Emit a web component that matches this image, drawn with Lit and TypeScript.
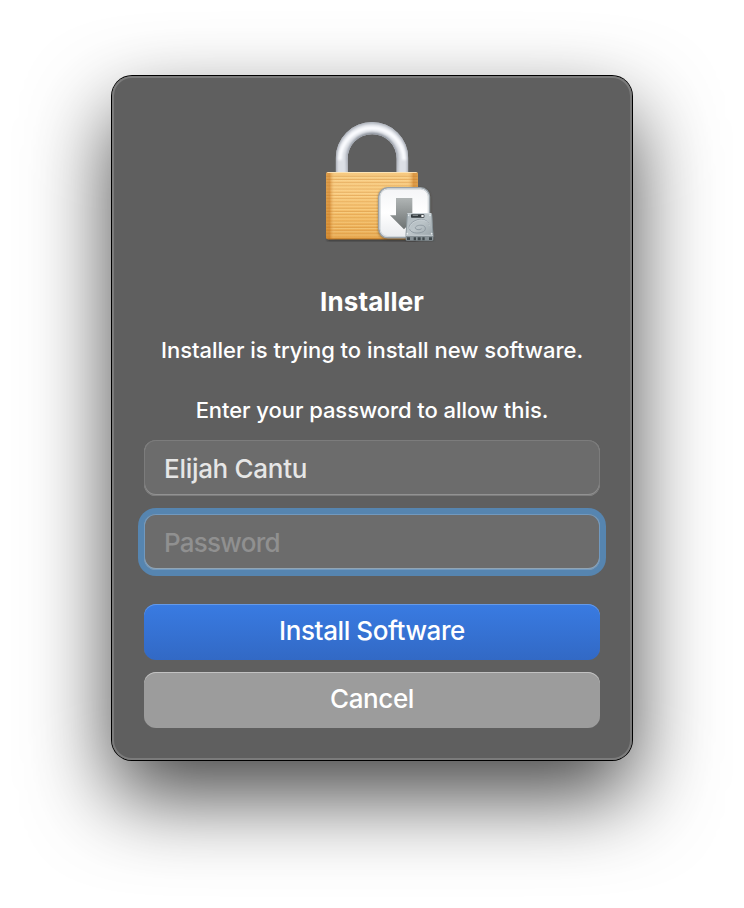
import { LitElement, html, css, svg } from "lit";
import { customElement } from "lit/decorators.js";

@customElement("installer-lock-icon")
class InstallerLockIcon extends LitElement {
  static styles = css`
    :host { display: block; width: 130px; height: 140px; }
    svg { display: block; width: 130px; height: 140px; }
  `;

  render() {
    const grooves = Array.from({ length: 19 }, (_, i) => 199 + i * 9.6);
    return html`
      <svg viewBox="0 0 390 420" aria-hidden="true">
        <defs>
          <linearGradient id="body" x1="0" y1="0" x2="0" y2="1">
            <stop offset="0" stop-color="#f5c67d" />
            <stop offset=".3" stop-color="#f8c87c" />
            <stop offset=".7" stop-color="#f1b55a" />
            <stop offset="1" stop-color="#e3a046" />
          </linearGradient>
          <linearGradient id="sides" x1="0" y1="0" x2="1" y2="0">
            <stop offset="0" stop-color="#c0741c" stop-opacity=".5" />
            <stop offset=".04" stop-color="#c8771f" stop-opacity=".6" />
            <stop offset=".1" stop-color="#ffe0a0" stop-opacity=".1" />
            <stop offset=".88" stop-color="#ffe0a0" stop-opacity=".1" />
            <stop offset=".95" stop-color="#c8771f" stop-opacity=".6" />
            <stop offset="1" stop-color="#c0741c" stop-opacity=".5" />
          </linearGradient>
          <linearGradient id="badge" x1="0" y1="0" x2="0" y2="1">
            <stop offset="0" stop-color="#f4f5f7" />
            <stop offset=".5" stop-color="#ffffff" />
            <stop offset="1" stop-color="#e9ebee" />
          </linearGradient>
          <linearGradient id="arrow" x1="0" y1="0" x2="0" y2="1">
            <stop offset="0" stop-color="#b0b5b5" />
            <stop offset="1" stop-color="#6d7272" />
          </linearGradient>
          <linearGradient id="disk" x1="0" y1="0" x2="1" y2="1">
            <stop offset="0" stop-color="#aeb8bd" />
            <stop offset=".5" stop-color="#bcc5c9" />
            <stop offset="1" stop-color="#97a2a7" />
          </linearGradient>
          <linearGradient id="archFade" x1="0" y1="60" x2="0" y2="187" gradientUnits="userSpaceOnUse">
            <stop offset="0" stop-color="#7f858f" />
            <stop offset=".6" stop-color="#a6abb5" />
            <stop offset="1" stop-color="#b9bdc6" />
          </linearGradient>
          <filter id="soft" x="-20%" y="-20%" width="140%" height="140%"><feGaussianBlur stdDeviation="3" /></filter>
          <filter id="slight" x="-20%" y="-20%" width="140%" height="140%"><feGaussianBlur stdDeviation="3" /></filter>
          <clipPath id="shackle"><path d="M62 187V145a109 109 0 0 1 218 0v42h-35v-41a73.500 73.500 0 0 0-147 0v41z" /></clipPath>
        </defs>
        <rect x="36" y="378" width="272" height="15" rx="6" fill="#222" opacity=".6" filter="url(#soft)" />
        <g clip-path="url(#shackle)">
          <rect x="55" y="30" width="235" height="160" fill="#dcdfe5" />
          <path d="M98 195v-49a73.500 73.500 0 0 1 147 0v49" fill="none" stroke="url(#archFade)" stroke-width="10" filter="url(#slight)" />
          <path d="M62 195V145a109 109 0 0 1 218 0v50" fill="none" stroke="#a5aab4" stroke-width="8" filter="url(#slight)" />
          <path d="M75 150a96 96 0 0 1 192 0" fill="none" stroke="#fbfcff" stroke-width="12" filter="url(#slight)" />
        </g>
        <rect x="33" y="186" width="276" height="202" rx="6" fill="url(#body)" />
        ${grooves.map((y) => svg`<path d=${`M34 ${y}h274`} stroke="#cd8430" stroke-width="2.500" opacity=".5" /><path d=${`M34 ${y + 3}h274`} stroke="#ffe3a5" stroke-width="2.500" opacity=".45" />`)}
        <rect x="33" y="186" width="276" height="202" rx="6" fill="url(#sides)" />
        <path d="M37 187.500h268" stroke="#ffe9c0" stroke-width="3" opacity=".85" />
        <path d="M37 386.500h268" stroke="#b56a18" stroke-width="3" opacity=".7" />
        <rect x="189" y="234" width="158" height="155" rx="29" fill="#3a3328" opacity=".45" filter="url(#soft)" />
        <rect x="191.500" y="233.500" width="152" height="150" rx="27" fill="url(#badge)" stroke="#99a2a9" stroke-width="4.500" />
        <rect x="195.500" y="237.500" width="144" height="142" rx="23" fill="none" stroke="#d0d6da" stroke-width="3" />
        <path d="M243 264h49v52h16l-41 42-42-42h18z" fill="url(#arrow)" />
        <path d="M273 383h82v9h-82z" fill="#252a2c" opacity=".55" filter="url(#soft)" />
        <path d="M279 309h68l4 3 4 62v6h-83v-6l4-62z" fill="url(#disk)" />
        <path d="M277 311h72" stroke="#dce2e5" stroke-width="2" />
        <path d="M277 312l-4 63M350 312l4 63" stroke="#77848a" stroke-width="2" />
        <path d="M272 375h83v14q0 3-4 3h-75q-4 0-4-3z" fill="#879196" />
        <path d="M273 376h81" stroke="#c8d0d4" stroke-width="3" />
        <path d="M276 382h9v8h-9zM296 382h7v9h-7zM308 382h9v9h-9zM322 382h7v9h-7zM342 382h9v8h-9z" fill="#3f484c" />
        <rect x="288" y="313" width="40" height="10" rx="2" fill="#343b3f" />
        <path d="M293 316h16" stroke="#b9c2c6" stroke-width="2" />
        <path d="M319 315h7v6h-7z" fill="#f3f5f6" />
        <path d="M342 345c-3-14-18-20-33-16-18 5-29 17-26 27 3 13 26 17 42 9 9-5 8-17-3-19-11-2-22 3-21 8 1 6 14 7 19 2" fill="none" stroke="#87929a" stroke-width="2.500" />
        <path d="M343 347c-3-14-18-20-33-16-18 5-29 17-26 27" fill="none" stroke="#dbe1e4" stroke-width="1.500" />
        <g fill="#e7ecee"><circle cx="281" cy="316" r="2.500" /><circle cx="345" cy="316" r="2.500" /><circle cx="277" cy="371" r="2.500" /><circle cx="350" cy="371" r="2.500" /></g>
      </svg>
    `;
  }
}

@customElement("app-root")
class AppRoot extends LitElement {
  static styles = css`
    :host {
      display: flex;
      justify-content: center;
      box-sizing: border-box;
      width: 744px;
      height: 908px;
      padding-top: 76px;
      background: #fff;
      overflow: hidden;
      font-family: Inter, "Liberation Sans", sans-serif;
      -webkit-font-smoothing: antialiased;
    }
    .dialog {
      box-sizing: border-box;
      display: flex;
      flex-direction: column;
      align-items: center;
      width: 520px;
      height: 684px;
      padding: 34px 32px 0;
      border-radius: 20px;
      background: #5f5f5f;
      color: #fff;
      box-shadow:
        inset 0 0 0 2px #7b7b7b,
        0 0 0 1px #000,
        0 36px 84px rgba(0, 0, 0, 0.73);
    }
    .icon { margin-left: 16px; }
    h1 {
      margin: 36px 0 0;
      font-size: 26px;
      line-height: 32px;
      font-weight: 750;
      letter-spacing: 0.1px;
      white-space: nowrap;
    }
    p {
      margin: 0;
      font-size: 22px;
      line-height: 28px;
      font-weight: 500;
      letter-spacing: -0.02px;
      white-space: nowrap;
    }
    .message { margin-top: 18px; }
    .prompt { margin-top: 32px; letter-spacing: -0.06px; }
    .field, button {
      box-sizing: border-box;
      flex: none;
      width: 456px;
      height: 56px;
      border: 0;
      border-radius: 12px;
      font-family: inherit;
      font-size: 26px;
      line-height: 32px;
      font-weight: 450;
      letter-spacing: -0.3px;
    }
    .field {
      padding: 0 20px;
      background: #6c6c6c;
      color: #e6e6e6;
      outline: none;
      box-shadow: inset 0 0 0 1px #7c7c7c, inset 0 -1px 0 1px #929292;
    }
    .field::placeholder { color: #909090; opacity: 1; }
    .user { margin-top: 16px; }
    .password {
      margin-top: 18px;
      letter-spacing: -0.75px;
      box-shadow: inset 0 0 0 1px #7199bf, inset 0 -1px 0 1px #91a5b5, 0 0 0 6px #5685b0;
    }
    button { padding: 0 0 2px; color: #fff; font-weight: 500; letter-spacing: -0.4px; }
    .primary {
      margin-top: 34px;
      background: linear-gradient(#397be2, #3269c5);
      box-shadow: inset 0 1px 0 #659ae8;
    }
    .secondary {
      margin-top: 12px;
      background: #9c9c9c;
      box-shadow: inset 0 1px 0 #c2c2c2;
    }
  `;

  render() {
    return html`
      <div class="dialog" role="dialog">
        <installer-lock-icon class="icon"></installer-lock-icon>
        <h1>Installer</h1>
        <p class="message">Installer is trying to install new software.</p>
        <p class="prompt">Enter your password to allow this.</p>
        <input class="field user" type="text" .value=${"Elijah Cantu"} spellcheck="false" />
        <input class="field password" type="password" placeholder="Password" />
        <button class="primary">Install Software</button>
        <button class="secondary">Cancel</button>
      </div>
    `;
  }
}
